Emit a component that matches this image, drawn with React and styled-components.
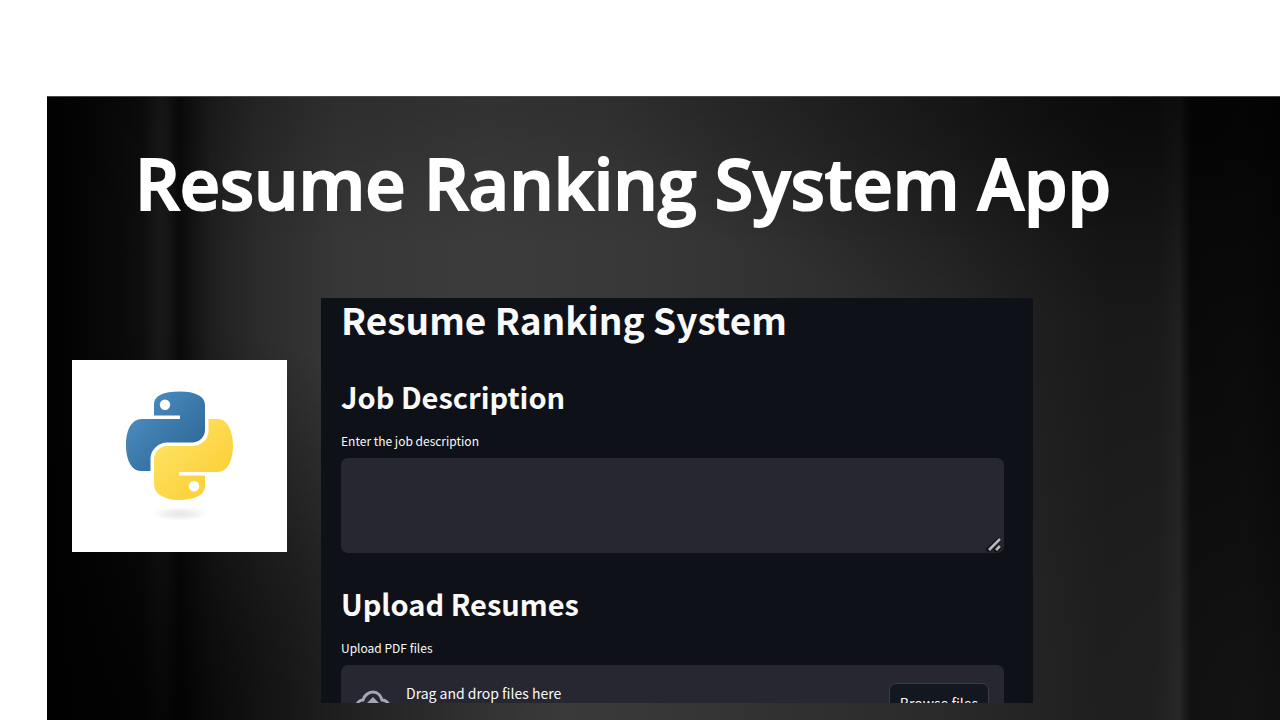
import React from 'react'
import styled, { createGlobalStyle } from 'styled-components'

const GlobalStyle = createGlobalStyle`
  * {
    box-sizing: border-box;
  }
  body {
    margin: 0;
    background: #ffffff;
    overflow: hidden;
  }
`

const Page = styled.div`
  display: flex;
  min-height: 100vh;
  padding: 96px 0 0 47px;
  font-family: 'Noto Sans CJK JP', 'Source Sans Pro', sans-serif;
`

const Stage = styled.main`
  flex: 1;
  display: flex;
  flex-direction: column;
  border-top: 1px solid #4a4a4a;
  color: #ffffff;
  background:
    linear-gradient(180deg, rgba(0, 0, 0, 0.18) 0, rgba(0, 0, 0, 0) 150px),
    radial-gradient(ellipse 560px 230px at 90% 0, rgba(0, 0, 0, 0.5), rgba(0, 0, 0, 0)),
    radial-gradient(ellipse 420px 400px at 8% 100%, rgba(0, 0, 0, 0.8), rgba(0, 0, 0, 0)),
    radial-gradient(ellipse 500px 420px at 100% 100%, rgba(255, 255, 255, 0.04), rgba(255, 255, 255, 0)),
    linear-gradient(
      90deg,
      #010101 0,
      #080808 60px,
      #0d0d0d 95px,
      #191919 112px,
      #171717 120px,
      #0a0a0a 132px,
      #1f1f1f 165px,
      #2b2b2b 210px,
      #373737 290px,
      #3c3c3c 440px,
      #383838 590px,
      #303030 760px,
      #272727 900px,
      #1f1f1f 990px,
      #191919 1060px,
      #191919 1110px,
      #202020 1132px,
      #090909 1144px,
      #0a0a0a 1200px,
      #070707 100%
    );
`

const Title = styled.h1`
  margin: 0;
  padding: 38px 40px 2px 88px;
  font-family: 'Open Sans', sans-serif;
  font-size: 70px;
  font-weight: 600;
  line-height: 96px;
  white-space: nowrap;
  -webkit-text-stroke: 2px #ffffff;
`

const Showcase = styled.div`
  display: flex;
  align-items: flex-start;
  gap: 34px;
  padding: 65px 24px 16px 25px;
`

const LogoCard = styled.figure`
  display: flex;
  justify-content: center;
  flex: 0 0 215px;
  height: 192px;
  margin: 62px 0 0;
  padding-top: 31px;
  background: #ffffff;
`

const AppPanel = styled.section`
  flex: 0 1 712px;
  height: 405px;
  padding: 0 29px 0 20px;
  overflow: hidden;
  background: #0e1117;
  color: #fafafa;
`

const PanelTitle = styled.h2`
  margin: 0 0 6px;
  font-size: 37px;
  font-weight: 700;
  line-height: 42px;
`

const SectionTitle = styled.h3`
  margin: 0;
  padding-top: 30px;
  font-size: 29px;
  font-weight: 700;
  line-height: 40px;
`

const Label = styled.label`
  display: block;
  padding: 13px 0 5px;
  font-size: 12px;
  line-height: 24px;
`

const TextBox = styled.div`
  position: relative;
  height: 95px;
`

const TextArea = styled.textarea`
  display: block;
  width: 100%;
  height: 100%;
  padding: 12px;
  border: 0;
  border-radius: 7px;
  outline: none;
  resize: none;
  background: #262730;
  color: inherit;
  font: inherit;
`

const Grip = styled.svg`
  position: absolute;
  right: 1px;
  bottom: 0;
`

const DropZone = styled.div`
  display: flex;
  align-items: flex-start;
  height: 84px;
  padding: 18px 15px 0 15px;
  border-radius: 7px;
  background: #262730;
`

const CloudIcon = styled.svg`
  flex: none;
  margin: 7px 16px 0 0;
`

const DropText = styled.span`
  flex: 1;
  font-size: 14px;
  line-height: 20px;
`

const BrowseButton = styled.button`
  width: 100px;
  height: 40px;
  padding: 0;
  border: 1px solid #3b3c46;
  border-radius: 7px;
  background: #131720;
  color: inherit;
  font: inherit;
  font-size: 14px;
`

function PythonLogo() {
  return (
    <svg width="108" height="132" viewBox="0 0 108 132" role="img" aria-label="Python">
      <defs>
        <linearGradient id="snakeBlue" x1="0" y1="0" x2="1" y2="1">
          <stop offset="0" stopColor="#5194c8" />
          <stop offset="1" stopColor="#28608f" />
        </linearGradient>
        <linearGradient id="snakeYellow" x1="0" y1="0" x2="1" y2="1">
          <stop offset="0" stopColor="#ffe66b" />
          <stop offset="1" stopColor="#fbcb2c" />
        </linearGradient>
        <radialGradient id="shadow">
          <stop offset="0" stopColor="#e6e6e6" />
          <stop offset="0.5" stopColor="#f0f0f0" />
          <stop offset="1" stopColor="#ffffff" />
        </radialGradient>
      </defs>
      <ellipse cx="54" cy="123" rx="28" ry="7" fill="url(#shadow)" />
      <path
        fill="url(#snakeBlue)"
        fillRule="evenodd"
        d="M54 0.500C37 0.500 28 5 28 13V24.500H54V28H16C5 28 0 40 0 54C0 68 5 80 15 80H24.500V67C25 58 33 51.500 41 51.500H66C73 51.500 79 46 79 39V14C79 5 69 0.500 54 0.500ZM39 8.500A5.200 5.200 0 1 1 39 18.900A5.200 5.200 0 1 1 39 8.500Z"
      />
      <path
        fill="url(#snakeYellow)"
        fillRule="evenodd"
        d="M82.500 28V41C82 49 74 55 66 55H41C34 55 28 61 28 68V93C28 103 39 109 53 109C68 109 79 104 79 95V84.500H53V81H91C102 81 107 69 107 54C107 40 101 28 92 28ZM68 90A5.200 5.200 0 1 1 68 100.400A5.200 5.200 0 1 1 68 90Z"
      />
    </svg>
  )
}

export default function App() {
  return (
    <>
      <GlobalStyle />
      <Page>
        <Stage>
          <Title>Resume Ranking System App</Title>
          <Showcase>
            <LogoCard>
              <PythonLogo />
            </LogoCard>
            <AppPanel>
              <PanelTitle>Resume Ranking System</PanelTitle>
              <SectionTitle>Job Description</SectionTitle>
              <Label htmlFor="job">Enter the job description</Label>
              <TextBox>
                <TextArea id="job" />
                <Grip width="18" height="16" viewBox="0 0 18 16" aria-hidden="true">
                  <path d="M2 14L15 2M9 14L16 9" stroke="#121318" strokeWidth="5" />
                  <path d="M4 13L15 2M11 13L15 9" stroke="#b8b8b8" strokeWidth="2.600" />
                </Grip>
              </TextBox>
              <SectionTitle>Upload Resumes</SectionTitle>
              <Label htmlFor="browse">Upload PDF files</Label>
              <DropZone>
                <CloudIcon width="34" height="28" viewBox="0 0 34 28" aria-hidden="true">
                  <path
                    d="M8 22C4 22 1 19 1 16C1 12 4 10 7 10C8 6 12 2 17 2C22 2 25 6 26 10C30 10 33 13 33 17C33 20 30 22 27 22Z"
                    fill="none"
                    stroke="#a5a6b2"
                    strokeWidth="3"
                  />
                  <path d="M17 7L24 14H19V22H15V14H10Z" fill="#a5a6b2" />
                </CloudIcon>
                <DropText>Drag and drop files here</DropText>
                <BrowseButton id="browse" type="button">Browse files</BrowseButton>
              </DropZone>
            </AppPanel>
          </Showcase>
        </Stage>
      </Page>
    </>
  )
}
